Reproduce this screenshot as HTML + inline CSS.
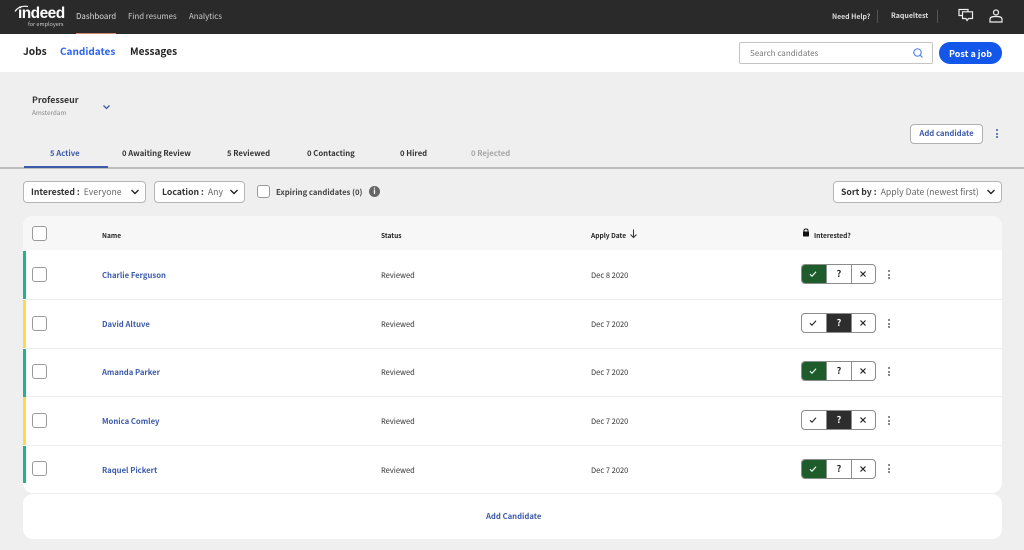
<!DOCTYPE html>
<html><head><meta charset="utf-8"><style>
*{box-sizing:border-box}
html,body{margin:0;padding:0}
body{width:1024px;height:550px;overflow:hidden;background:#efefef;position:relative;font-family:"Noto Sans CJK JP","Liberation Sans",sans-serif;color:#2d2d2d}
.a{position:absolute;white-space:nowrap}
.b{font-weight:bold}
.n{font-size:7.700px;font-weight:bold;color:#3b5aa8;line-height:10px}
.s{font-size:7.500px;color:#333;line-height:10px}
.h{font-size:6.600px;font-weight:bold;line-height:9px;color:#222}
.cb{position:absolute;left:32px;width:15px;height:15px;border:1.300px solid #9a9a9a;border-radius:3px;background:#fff}
.dd{position:absolute;height:22px;background:#fff;border:1px solid #b5b5b5;border-radius:4px;font-size:8.700px;line-height:20px;white-space:nowrap;padding-left:7px}
.dd b{color:#333}.dd span{color:#666;margin-left:4px}
.dd svg{position:absolute;top:6px}
.tab{position:absolute;top:149px;font-size:7.700px;font-weight:bold;line-height:10px;white-space:nowrap;color:#333}
.bar{position:absolute;left:23px;width:3px;height:48px}
.sep{position:absolute;left:26px;width:976px;height:1px;background:#eee}
.tg{position:absolute;left:801px;width:75px;height:20px;border:1px solid #8c8c8c;border-radius:4px;background:#fff;overflow:hidden}
.tg div{position:absolute;top:0;height:18px;font-size:9px;font-weight:bold;text-align:center;line-height:18px;color:#222}
.tg .c1{left:0;width:24px}.tg .c2{left:24px;width:26px;border-left:1px solid #8c8c8c;border-right:1px solid #8c8c8c}.tg .c3{left:50px;width:24px}
.tg .g{background:#1f5c2b;color:#fff}.tg .k{background:#2d2d2d;color:#fff}
.tg svg{position:absolute;left:7px;top:5px}
.dots{position:absolute;left:888px;width:3px;height:11px}
.dots i,.vd i{display:block;width:2px;height:2px;border-radius:50%;background:#666;margin-bottom:1.600px}
</style></head><body>

<div class="a" style="left:0;top:0;width:1024px;height:34px;background:#2a2a2a"></div>
<div class="a" style="left:76px;top:33px;width:40px;height:1px;background:#d98a6a"></div>
<svg class="a" style="left:13px;top:3px" width="18" height="11" viewBox="0 0 18 11"><path d="M2 8.500C4.500 4.500 9 2.500 15 3.500" fill="none" stroke="#eee" stroke-width="1.200"/></svg>
<div class="a" style="left:18px;top:4px;font-size:15.500px;line-height:20px;color:#fff;letter-spacing:-.55px;font-weight:bold;font-family:'Liberation Sans',sans-serif">indeed</div>
<div class="a" style="left:28px;top:20px;font-size:5.500px;line-height:8px;color:#ccc">for employers</div>
<div class="a" style="left:76px;top:11px;font-size:7.900px;line-height:11px;color:#ddd">Dashboard</div>
<div class="a" style="left:128px;top:11px;font-size:7.800px;line-height:11px;color:#ccc">Find resumes</div>
<div class="a" style="left:189px;top:11px;font-size:7.800px;line-height:11px;color:#ccc">Analytics</div>
<div class="a b" style="left:832px;top:12px;font-size:6.900px;line-height:9px;color:#ddd">Need Help?</div>
<div class="a" style="left:877px;top:10px;width:1px;height:13px;background:#555"></div>
<div class="a b" style="left:891px;top:12px;font-size:7px;line-height:9px;color:#ddd">Raqueltest</div>
<div class="a" style="left:937px;top:10px;width:1px;height:13px;background:#555"></div>
<svg class="a" style="left:958px;top:8px" width="16" height="14" viewBox="0 0 16 14" fill="none" stroke="#eee" stroke-width="1.200"><path d="M4 7.500H1V1.500H10V3.500"/><path d="M4.500 3.800H14.500V10.500H10.500L9 12.500L8 10.500H4.500Z"/></svg>
<svg class="a" style="left:989px;top:9px" width="14" height="14" viewBox="0 0 14 14" fill="none" stroke="#eee" stroke-width="1.200"><circle cx="7" cy="3.500" r="2.500"/><path d="M1 13V10C1 8 3 7.500 7 7.500S13 8 13 10V13Z"/></svg>

<div class="a" style="left:0;top:34px;width:1024px;height:38px;background:#fff"></div>
<div class="a b" style="left:23px;top:44px;font-size:10.200px;line-height:14px;color:#222">Jobs</div>
<div class="a b" style="left:60px;top:44px;font-size:10px;line-height:14px;color:#2a64f0">Candidates</div>
<div class="a b" style="left:130px;top:44px;font-size:10.100px;line-height:14px;color:#222">Messages</div>
<div class="a" style="left:739px;top:42px;width:194px;height:22px;background:#fff;border:1px solid #c4c4c4;border-radius:2px"></div>
<div class="a" style="left:750px;top:49px;font-size:8px;line-height:10px;color:#777">Search candidates</div>
<svg class="a" style="left:912px;top:47px" width="12" height="12" viewBox="0 0 12 12" fill="none" stroke="#5a85e8" stroke-width="1.200"><circle cx="5.500" cy="5.500" r="3.700"/><path d="M8.200 8.200L10.500 10.500"/></svg>
<div class="a b" style="left:939px;top:42px;width:63px;height:22px;background:#1257ea;border-radius:11px;color:#fff;font-size:9px;line-height:23px;text-align:center">Post a job</div>

<div class="a b" style="left:32px;top:94px;font-size:8.800px;line-height:12px;color:#333">Professeur</div>
<div class="a" style="left:32px;top:108px;font-size:6.400px;line-height:9px;color:#888">Amsterdam</div>
<svg class="a" style="left:102px;top:104px" width="9" height="7" viewBox="0 0 9 7" fill="none" stroke="#3b5aa8" stroke-width="1.300"><path d="M1.500 1.500L4.500 4.500L7.500 1.500"/></svg>
<div class="a b" style="left:910px;top:124px;width:73px;height:20px;background:#fff;border:1px solid #b0b0b0;border-radius:4px;color:#3b5aa8;font-size:7.700px;line-height:18px;text-align:center">Add candidate</div>
<div class="a vd" style="left:996px;top:129px"><i style="background:#3b5aa8"></i><i style="background:#3b5aa8"></i><i style="background:#3b5aa8"></i></div>

<div class="tab" style="left:50px;color:#3b5aa8">5 Active</div>
<div class="tab" style="left:122px">0 Awaiting Review</div>
<div class="tab" style="left:227px">5 Reviewed</div>
<div class="tab" style="left:307px">0 Contacting</div>
<div class="tab" style="left:400px">0 Hired</div>
<div class="tab" style="left:471px;color:#a5a5a5">0 Rejected</div>
<div class="a" style="left:0;top:167px;width:1024px;height:1.500px;background:#bdbdbd"></div>
<div class="a" style="left:24px;top:166px;width:84px;height:2px;background:#3b5aa8"></div>

<div class="dd" style="left:23px;top:181px;width:123px"><b>Interested :</b><span>Everyone</span><svg style="left:106px" width="10" height="8" viewBox="0 0 10 8" fill="none" stroke="#222" stroke-width="1.400"><path d="M1.500 2L5 5.500L8.500 2"/></svg></div>
<div class="dd" style="left:154px;top:181px;width:91px"><b>Location :</b><span>Any</span><svg style="left:74px" width="10" height="8" viewBox="0 0 10 8" fill="none" stroke="#222" stroke-width="1.400"><path d="M1.500 2L5 5.500L8.500 2"/></svg></div>
<div class="cb" style="left:257px;top:185px;width:13px;height:13px;border-width:1px"></div>
<div class="a b" style="left:276px;top:187px;font-size:7.700px;line-height:11px;color:#444">Expiring candidates (0)</div>
<div class="a b" style="left:369px;top:186px;width:11px;height:11px;border-radius:50%;background:#666;color:#fff;font-size:8px;line-height:11px;text-align:center">i</div>
<div class="dd" style="left:833px;top:181px;width:169px"><b>Sort by :</b><span>Apply Date (newest first)</span><svg style="left:152px" width="10" height="8" viewBox="0 0 10 8" fill="none" stroke="#222" stroke-width="1.400"><path d="M1.500 2L5 5.500L8.500 2"/></svg></div>

<div class="a" style="left:23px;top:216px;width:979px;height:277px;background:#fff;border-radius:10px;overflow:hidden">
<div style="height:34px;background:#f7f7f7"></div></div>
<div class="a" style="left:23px;top:494px;width:979px;height:45px;background:#fff;border-radius:10px"></div>
<div class="a n" style="left:486px;top:512px;color:#3b5aa8">Add Candidate</div>

<div class="cb" style="top:226px"></div>
<div class="a h" style="left:102px;top:231px">Name</div>
<div class="a h" style="left:381px;top:231px">Status</div>
<div class="a h" style="left:591px;top:231px">Apply Date</div>
<svg class="a" style="left:628px;top:228px" width="11" height="11" viewBox="0 0 11 11" fill="none" stroke="#333" stroke-width="1"><path d="M5.500 1.500V9.500M2.500 6.500L5.500 9.500L8.500 6.500"/></svg>
<svg class="a" style="left:802px;top:228px" width="8" height="9" viewBox="0 0 8 9"><path d="M2 3.500V2.500C2 .5 6 .5 6 2.500V3.500" fill="none" stroke="#111" stroke-width="1"/><rect x="1" y="3.500" width="6" height="5" rx=".6" fill="#111"/></svg>
<div class="a h" style="left:814px;top:231px">Interested?</div>

<!-- row 1 -->
<div class="bar" style="top:251px;background:#1db58a"></div>
<div class="cb" style="top:267px"></div>
<div class="a n" style="left:102px;top:271px">Charlie Ferguson</div>
<div class="a s" style="left:381px;top:271px">Reviewed</div>
<div class="a s" style="left:591px;top:271px">Dec 8 2020</div>
<div class="tg" style="top:264px"><div class="c1 g"><svg width="8" height="8" viewBox="0 0 8 8" fill="none" stroke="#fff" stroke-width="1.100"><path d="M1 4.300L3 6.200L7 1.800"/></svg></div><div class="c2">?</div><div class="c3"><svg width="8" height="8" viewBox="0 0 8 8" fill="none" stroke="#222" stroke-width="1.200"><path d="M1.500 1.500L6.500 6.500M6.500 1.500L1.500 6.500"/></svg></div></div>
<div class="dots" style="top:270px"><i></i><i></i><i></i></div>
<div class="sep" style="top:299px"></div>

<!-- row 2 -->
<div class="bar" style="top:300px;background:#ffd94a"></div>
<div class="cb" style="top:316px"></div>
<div class="a n" style="left:102px;top:320px">David Altuve</div>
<div class="a s" style="left:381px;top:320px">Reviewed</div>
<div class="a s" style="left:591px;top:320px">Dec 7 2020</div>
<div class="tg" style="top:313px"><div class="c1"><svg width="8" height="8" viewBox="0 0 8 8" fill="none" stroke="#222" stroke-width="1.100"><path d="M1 4.300L3 6.200L7 1.800"/></svg></div><div class="c2 k">?</div><div class="c3"><svg width="8" height="8" viewBox="0 0 8 8" fill="none" stroke="#222" stroke-width="1.200"><path d="M1.500 1.500L6.500 6.500M6.500 1.500L1.500 6.500"/></svg></div></div>
<div class="dots" style="top:319px"><i></i><i></i><i></i></div>
<div class="sep" style="top:348px"></div>

<!-- row 3 -->
<div class="bar" style="top:349px;background:#1db58a"></div>
<div class="cb" style="top:364px"></div>
<div class="a n" style="left:102px;top:368px">Amanda Parker</div>
<div class="a s" style="left:381px;top:368px">Reviewed</div>
<div class="a s" style="left:591px;top:368px">Dec 7 2020</div>
<div class="tg" style="top:361px"><div class="c1 g"><svg width="8" height="8" viewBox="0 0 8 8" fill="none" stroke="#fff" stroke-width="1.100"><path d="M1 4.300L3 6.200L7 1.800"/></svg></div><div class="c2">?</div><div class="c3"><svg width="8" height="8" viewBox="0 0 8 8" fill="none" stroke="#222" stroke-width="1.200"><path d="M1.500 1.500L6.500 6.500M6.500 1.500L1.500 6.500"/></svg></div></div>
<div class="dots" style="top:367px"><i></i><i></i><i></i></div>
<div class="sep" style="top:396px"></div>

<!-- row 4 -->
<div class="bar" style="top:397px;background:#ffd94a"></div>
<div class="cb" style="top:413px"></div>
<div class="a n" style="left:102px;top:417px">Monica Comley</div>
<div class="a s" style="left:381px;top:417px">Reviewed</div>
<div class="a s" style="left:591px;top:417px">Dec 7 2020</div>
<div class="tg" style="top:410px"><div class="c1"><svg width="8" height="8" viewBox="0 0 8 8" fill="none" stroke="#222" stroke-width="1.100"><path d="M1 4.300L3 6.200L7 1.800"/></svg></div><div class="c2 k">?</div><div class="c3"><svg width="8" height="8" viewBox="0 0 8 8" fill="none" stroke="#222" stroke-width="1.200"><path d="M1.500 1.500L6.500 6.500M6.500 1.500L1.500 6.500"/></svg></div></div>
<div class="dots" style="top:416px"><i></i><i></i><i></i></div>
<div class="sep" style="top:445px"></div>

<!-- row 5 -->
<div class="bar" style="top:446px;height:37px;background:#1db58a"></div>
<div class="cb" style="top:461px"></div>
<div class="a n" style="left:102px;top:466px">Raquel Pickert</div>
<div class="a s" style="left:381px;top:466px">Reviewed</div>
<div class="a s" style="left:591px;top:466px">Dec 7 2020</div>
<div class="tg" style="top:459px"><div class="c1 g"><svg width="8" height="8" viewBox="0 0 8 8" fill="none" stroke="#fff" stroke-width="1.100"><path d="M1 4.300L3 6.200L7 1.800"/></svg></div><div class="c2">?</div><div class="c3"><svg width="8" height="8" viewBox="0 0 8 8" fill="none" stroke="#222" stroke-width="1.200"><path d="M1.500 1.500L6.500 6.500M6.500 1.500L1.500 6.500"/></svg></div></div>
<div class="dots" style="top:464px"><i></i><i></i><i></i></div>

</body></html>
